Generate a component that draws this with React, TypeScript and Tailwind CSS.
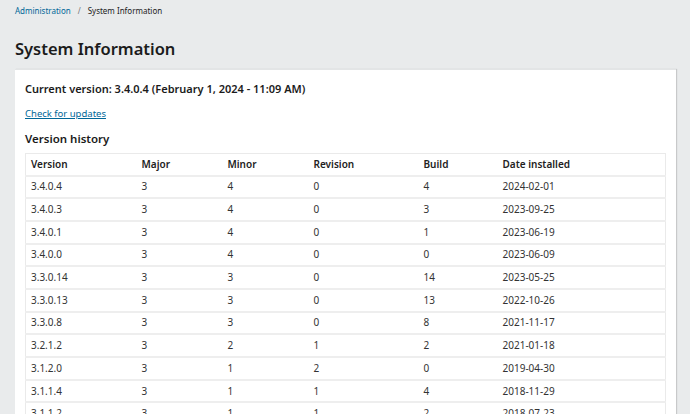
const rows: [string, string, string, string, string, string][] = [
  ['3.4.0.4', '3', '4', '0', '4', '2024-02-01'],
  ['3.4.0.3', '3', '4', '0', '3', '2023-09-25'],
  ['3.4.0.1', '3', '4', '0', '1', '2023-06-19'],
  ['3.4.0.0', '3', '4', '0', '0', '2023-06-09'],
  ['3.3.0.14', '3', '3', '0', '14', '2023-05-25'],
  ['3.3.0.13', '3', '3', '0', '13', '2022-10-26'],
  ['3.3.0.8', '3', '3', '0', '8', '2021-11-17'],
  ['3.2.1.2', '3', '2', '1', '2', '2021-01-18'],
  ['3.1.2.0', '3', '1', '2', '0', '2019-04-30'],
  ['3.1.1.4', '3', '1', '1', '4', '2018-11-29'],
  ['3.1.1.2', '3', '1', '1', '2', '2018-07-23'],
];

const cols = ['Version', 'Major', 'Minor', 'Revision', 'Build', 'Date installed'];
const widths = ['w-[111px]', 'w-[86px]', 'w-[86px]', 'w-[110px]', 'w-[79px]', ''];

export default function App() {
  return (
    <div
      className="h-[414px] overflow-hidden bg-[#e9ebec] text-[#222]"
      style={{ fontFamily: '"Noto Sans", "Open Sans", sans-serif' }}
    >
      <nav className="flex items-center gap-[7px] px-[15px] pt-[2px] h-[20px] text-[8px]">
        <a className="text-[#006798]">Administration</a>
        <span className="text-[#777]">/</span>
        <span className="text-[#222]">System Information</span>
      </nav>
      <h1 className="px-[15px] pt-[17px] text-[16.5px] font-semibold leading-[24px] text-[#1b1b1b]">System Information</h1>
      <div className="ml-[15px] mr-[14px] mt-[8px] bg-white border-t border-[#e3e5e6] shadow-[1px_0_1px_rgba(0,0,0,0.14)] px-[10px] pt-[9px] h-[400px]">
        <h2 className="text-[11px] font-semibold leading-[20px] text-[#1b1b1b]">
          Current version: 3.4.0.4 (February 1, 2024 - 11:09 AM)
        </h2>
        <a className="block mt-[8px] text-[9.5px] leading-[14px] text-[#006798] underline">Check for updates</a>
        <h3 className="mt-[9px] text-[11.5px] font-semibold leading-[18px] text-[#1b1b1b]">Version history</h3>
        <table className="mt-[5px] w-full border border-[#eaeaea] border-collapse text-[10px]">
          <thead>
            <tr className="h-[22px] border-b-2 border-[#eeeeee]">
              {cols.map((c, i) => (
                <th key={c} className={`${widths[i]} text-left font-semibold pl-[5px] text-[#222]`}>
                  {c}
                </th>
              ))}
            </tr>
          </thead>
          <tbody>
            {rows.map((r) => (
              <tr key={r[0]} className="h-[22.7px] border-b-2 border-[#eeeeee]">
                {r.map((v, i) => (
                  <td key={i} className="pl-[5px] text-[#333]">
                    {v}
                  </td>
                ))}
              </tr>
            ))}
          </tbody>
        </table>
      </div>
    </div>
  );
}
